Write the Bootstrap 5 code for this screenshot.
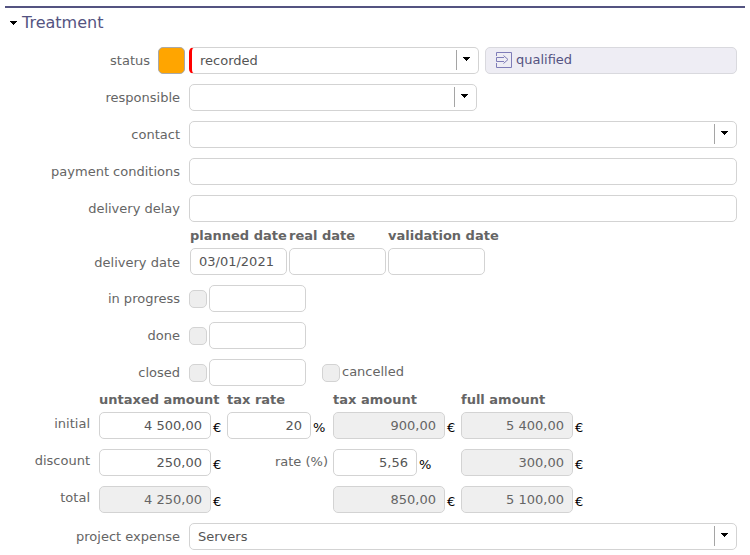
<!DOCTYPE html>
<html lang="en">
<head>
<meta charset="utf-8">
<meta name="viewport" content="width=device-width, initial-scale=1">
<title>Treatment</title>
<link href="https://cdn.jsdelivr.net/npm/bootstrap@5.3.0/dist/css/bootstrap.min.css" rel="stylesheet">
<style>
  body { font-family: Verdana, "DejaVu Sans", sans-serif; font-size: 13px; line-height: 17px; color: #656565; background: #fff; }
  .panel { margin: 6px 5px 0; border-top: 2px solid #545381; }
  .panel-toggle { height: 29px; padding: 0 5px; font-size: 16px; line-height: 20px; color: #545381; gap: 5px; }
  .panel-body { padding: 10px 8px 0 0; gap: 10px; }
  .line-label { flex: 0 0 184px; padding-right: 9px; text-align: right; }
  .status-label { flex-basis: 153px; padding-right: 8px; }
  .field { height: 27px; min-height: 27px; padding: 0 8px; font-size: 13px; line-height: 17px; color: #555; border: 1px solid #d3d3d3; border-radius: 5px; background-color: #fff; }
  .amounts .field:read-only { background-color: #efefef; color: #656565; }
  .picker { background-image: url("data:image/svg+xml,%3Csvg xmlns='http://www.w3.org/2000/svg' width='16' height='20'%3E%3Cpath d='M0 0h1v20H0z' fill='%23a5a5a5'/%3E%3Cpath d='M7 7h7v1h-1v1h-1v1h-1v1h-1v-1H9V9H8V8H7z' fill='%23000'/%3E%3C/svg%3E"); background-repeat: no-repeat; background-size: 16px 20px; background-position: right 6px top 2px; }
  .picker-status { width: 290px; border-left: 3px solid #f00; padding-left: 8px; margin-right: 6px; }
  .picker-person { width: 288px; }
  .swatch { flex: 0 0 27px; height: 27px; margin-right: 4px; border: 1px solid #a9a9a9; border-radius: 5px; background: #ffa500; }
  .next-status { height: 27px; padding: 0 10px 2px; font-size: 13px; line-height: 17px; gap: 4px; color: #545381; background: #eeedf4; border: 1px solid #d9d9de; border-radius: 5px; }
  .date-line { margin-top: -5px; }
  .dates { gap: 2px; padding-left: 1px; }
  .day { flex: 0 0 97px; width: 97px; }
  .day-head { width: 97px; height: 21px; white-space: nowrap; font-weight: bold; }
  .tick.form-check-input { flex: 0 0 18px; width: 18px; height: 18px; margin: 1px 2px 0 0; border: 1px solid #d3d3d3; border-radius: 5px; background-color: #eee; opacity: 1; }
  .tick-extra { margin-left: 16px; }
  .tick-extra label { padding-bottom: 2px; }
  .amounts { table-layout: fixed; width: 100%; margin-top: -6px; }
  .amounts th, .amounts td { padding: 0; white-space: nowrap; height: 37px; vertical-align: top; }
  .amounts thead th, .amounts thead td { height: 22px; padding-top: 1px; font-weight: bold; }
  .amounts tbody th { font-weight: normal; text-align: right; padding: 3px 9px 0 0; }
  .amounts tbody tr:last-child td, .amounts tbody tr:last-child th { height: 27px; }
  .amounts .field { text-align: right; }
  .money { width: 112px; }
  .rate { width: 84px; }
  .unit { color: #000; padding: 3px 0 0 2px; }
  .rate-label { padding: 4px 5px 0 0; }
  .c-label { width: 94px; }
  .c-money { width: 128px; }
  .c-rate { width: 106px; }
</style>
</head>
<body>
<main class="panel">
  <button type="button" class="panel-toggle btn d-flex align-items-center border-0 rounded-0" aria-expanded="true">
    <svg width="7" height="4" viewBox="0 0 7 4" aria-hidden="true" shape-rendering="crispEdges"><path d="M0 0h7v1H6v1H5v1H4v1H3V3H2V2H1V1H0z" fill="#000"/></svg>
    <span>Treatment</span>
  </button>
  <form class="panel-body d-flex flex-column">
    <div class="d-flex align-items-center">
      <label class="line-label status-label" for="status">status</label>
      <span class="swatch"></span>
      <select class="field picker picker-status form-select" id="status"><option>recorded</option></select>
      <button type="button" class="next-status btn d-flex align-items-center flex-grow-1">
        <svg width="16" height="16" viewBox="0 0 16 16" fill="none" stroke="#7f7db8" aria-hidden="true"><path d="M.5 4V.5h15v15H.5V11"/><path d="M8 5.500H.5v4H8M7.500 3.500l4.500 4-4.500 4"/></svg>
        <span>qualified</span>
      </button>
    </div>
    <div class="d-flex align-items-center">
      <label class="line-label" for="responsible">responsible</label>
      <select class="field picker picker-person form-select" id="responsible"><option></option></select>
    </div>
    <div class="d-flex align-items-center">
      <label class="line-label" for="contact">contact</label>
      <select class="field picker form-select" id="contact"><option></option></select>
    </div>
    <div class="d-flex align-items-center">
      <label class="line-label" for="payment">payment conditions</label>
      <input type="text" class="field form-control" id="payment">
    </div>
    <div class="d-flex align-items-center">
      <label class="line-label" for="delay">delivery delay</label>
      <input type="text" class="field form-control" id="delay">
    </div>
    <div class="date-line d-flex align-items-end">
      <label class="line-label pb-1" for="planned">delivery date</label>
      <div class="dates d-flex">
        <div><label class="day-head d-block" for="planned">planned date</label><input type="text" class="field day form-control" id="planned" value="03/01/2021"></div>
        <div><label class="day-head d-block" for="real">real date</label><input type="text" class="field day form-control" id="real"></div>
        <div><label class="day-head d-block" for="validation">validation date</label><input type="text" class="field day form-control" id="validation"></div>
      </div>
    </div>
    <div class="d-flex align-items-center">
      <label class="line-label" for="progress">in progress</label>
      <input type="checkbox" class="tick form-check-input" id="progress" disabled>
      <input type="text" class="field day form-control" aria-label="in progress date">
    </div>
    <div class="d-flex align-items-center">
      <label class="line-label" for="done">done</label>
      <input type="checkbox" class="tick form-check-input" id="done" disabled>
      <input type="text" class="field day form-control" aria-label="done date">
    </div>
    <div class="d-flex align-items-center">
      <label class="line-label" for="closed">closed</label>
      <input type="checkbox" class="tick form-check-input" id="closed" disabled>
      <input type="text" class="field day form-control" aria-label="closed date">
      <div class="tick-extra d-flex align-items-center">
        <input type="checkbox" class="tick form-check-input" id="cancelled" disabled>
        <label for="cancelled">cancelled</label>
      </div>
    </div>
    <table class="amounts">
      <colgroup><col class="c-label"><col class="c-money"><col class="c-rate"><col class="c-money"><col></colgroup>
      <thead>
        <tr><td></td><th scope="col">untaxed amount</th><th scope="col">tax rate</th><th scope="col">tax amount</th><th scope="col">full amount</th></tr>
      </thead>
      <tbody>
        <tr>
          <th scope="row">initial</th>
          <td><div class="d-flex align-items-center"><input type="text" class="field money form-control" value="4 500,00" aria-label="initial untaxed amount"><span class="unit">€</span></div></td>
          <td><div class="d-flex align-items-center"><input type="text" class="field rate form-control" value="20" aria-label="tax rate"><span class="unit">%</span></div></td>
          <td><div class="d-flex align-items-center"><input type="text" class="field money form-control" value="900,00" readonly aria-label="initial tax amount"><span class="unit">€</span></div></td>
          <td><div class="d-flex align-items-center"><input type="text" class="field money form-control" value="5 400,00" readonly aria-label="initial full amount"><span class="unit">€</span></div></td>
        </tr>
        <tr>
          <th scope="row">discount</th>
          <td><div class="d-flex align-items-center"><input type="text" class="field money form-control" value="250,00" aria-label="discount untaxed amount"><span class="unit">€</span></div></td>
          <td class="text-end"><label class="rate-label" for="discount-rate">rate (%)</label></td>
          <td><div class="d-flex align-items-center"><input type="text" class="field rate form-control" id="discount-rate" value="5,56"><span class="unit">%</span></div></td>
          <td><div class="d-flex align-items-center"><input type="text" class="field money form-control" value="300,00" readonly aria-label="discount full amount"><span class="unit">€</span></div></td>
        </tr>
        <tr>
          <th scope="row">total</th>
          <td><div class="d-flex align-items-center"><input type="text" class="field money form-control" value="4 250,00" readonly aria-label="total untaxed amount"><span class="unit">€</span></div></td>
          <td></td>
          <td><div class="d-flex align-items-center"><input type="text" class="field money form-control" value="850,00" readonly aria-label="total tax amount"><span class="unit">€</span></div></td>
          <td><div class="d-flex align-items-center"><input type="text" class="field money form-control" value="5 100,00" readonly aria-label="total full amount"><span class="unit">€</span></div></td>
        </tr>
      </tbody>
    </table>
    <div class="d-flex align-items-center">
      <label class="line-label" for="expense">project expense</label>
      <select class="field picker form-select" id="expense"><option>Servers</option></select>
    </div>
  </form>
</main>
<script src="https://cdn.jsdelivr.net/npm/bootstrap@5.3.0/dist/js/bootstrap.bundle.min.js"></script>
</body>
</html>
